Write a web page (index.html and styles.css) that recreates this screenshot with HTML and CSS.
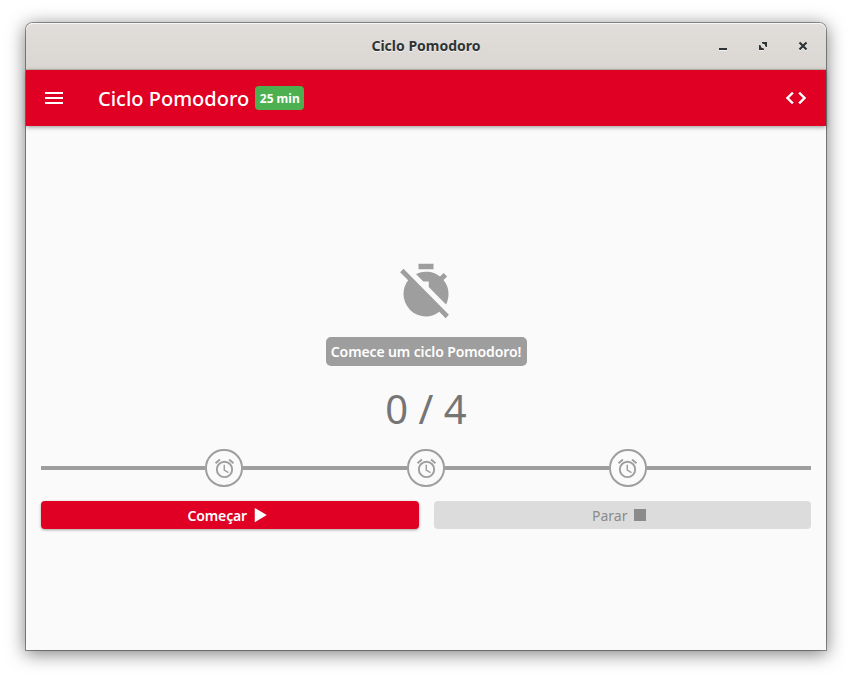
FILE: index.html
```html
<!DOCTYPE html>
<html lang="pt-BR">
<head>
<meta charset="utf-8">
<title>Ciclo Pomodoro</title>
<link rel="stylesheet" href="styles.css">
</head>
<body>
<svg class="defs" width="0" height="0">
  <symbol id="alarm" viewBox="0 0 24 24"><path d="M12 20a7 7 0 0 1-7-7 7 7 0 0 1 7-7 7 7 0 0 1 7 7 7 7 0 0 1-7 7m0-16a9 9 0 0 0-9 9 9 9 0 0 0 9 9 9 9 0 0 0 9-9 9 9 0 0 0-9-9m.5 4H11v6l4.750 2.850.75-1.230-4-2.370V8M7.880 3.390L6.600 1.860 2 5.710l1.290 1.530 4.590-3.850M22 5.720l-4.600-3.860-1.290 1.530 4.600 3.860L22 5.720z"/></symbol>
</svg>
<div class="window">
  <header class="titlebar">
    <span class="side"></span>
    <h1 class="caption">Ciclo Pomodoro</h1>
    <div class="side controls">
      <svg width="10" height="10" viewBox="0 0 10 10"><path class="glow" d="M1 8h8v2H1z"/><path d="M1 7h8v2H1z"/></svg>
      <svg width="10" height="10" viewBox="0 0 10 10"><path class="glow" d="M4 2h5v5L7.500 6 6 4.500zM1 5l2 1 2 2 1 2H1z"/><path d="M4 1h5v5H8L7 5V4L6 3H5L4 2zM1 4h1l1 1v1l1 1h1l1 1v1H1z"/></svg>
      <svg width="10" height="10" viewBox="0 0 10 10"><path class="glow-line" d="M1.500 2.500l7 7M8.500 2.500l-7 7"/><path class="line" d="M1.500 1.500l7 7M8.500 1.500l-7 7"/></svg>
    </div>
  </header>
  <nav class="appbar">
    <svg class="menu" width="24" height="24" viewBox="0 0 24 24"><path d="M3 6h18v2H3zm0 5h18v2H3zm0 5h18v2H3z"/></svg>
    <h2 class="app-title">Ciclo Pomodoro</h2>
    <span class="badge">25 min</span>
    <svg class="code" width="24" height="24" viewBox="0 0 24 24"><path d="M14.600 16.600l4.600-4.600-4.600-4.600L16 6l6 6-6 6-1.400-1.400m-5.200 0L4.800 12l4.600-4.600L8 6l-6 6 6 6 1.400-1.400z"/></svg>
  </nav>
  <main class="content">
    <svg class="timer" width="60" height="60" viewBox="0 -.2 24 24"><path d="M9 .9h6v2.150H9zM3 2.900L1.650 4.250 4.850 7.450A9 9 0 0 0 3 13 9 9 0 0 0 12 22 9 9 0 0 0 17.300 20.100L19.850 22.650 21.150 21.300zM8 5A9 9 0 0 1 17.600 6l1.450-1.400L20.450 6 19 7.400A9 9 0 0 1 20 17.200L13.100 10.200V8H10.900z"/></svg>
    <p class="hint">Comece um ciclo Pomodoro!</p>
    <p class="count">0 / 4</p>
    <div class="progress">
      <i class="bar"></i><span class="stop"><svg width="23" height="23"><use href="#alarm"/></svg></span>
      <i class="bar"></i><span class="stop"><svg width="23" height="23"><use href="#alarm"/></svg></span>
      <i class="bar"></i><span class="stop"><svg width="23" height="23"><use href="#alarm"/></svg></span>
      <i class="bar"></i>
    </div>
    <div class="actions">
      <button class="btn start"><span>Começar</span><svg width="18" height="18" viewBox="0 0 24 24"><path d="M5 2.500v19L21 12z"/></svg></button>
      <button class="btn halt" disabled><span>Parar</span><svg width="18" height="18" viewBox="0 0 24 24"><path d="M4 4h16v16H4z"/></svg></button>
    </div>
  </main>
</div>
</body>
</html>
```
FILE: styles.css
```css
* { box-sizing: border-box; }
body { margin: 0; height: 679px; overflow: hidden; background: #fff; font-family: "Noto Sans", sans-serif; }
h1, h2, p { margin: 0; }
svg { display: block; fill: currentColor; flex: none; }
.defs { position: absolute; }
.window {
  width: 800px; height: 627px; margin: 23px 0 0 26px;
  background: #fafafa; border-radius: 7px 7px 0 0;
  box-shadow: 0 0 0 1px rgba(0,0,0,.38), 0 3px 18px 1px rgba(0,0,0,.5);
}
.titlebar {
  height: 47px; display: flex; align-items: center;
  padding: 0 18px; border-radius: 7px 7px 0 0;
  background: linear-gradient(#e1dedb, #dad6d2);
  border-bottom: 1px solid #bfb8b1;
  box-shadow: inset 0 1px #f8f7f7;
  color: #2e3436;
}
.side { flex: 1; }
.caption { font-size: 14px; line-height: 20px; text-shadow: 0 1px rgba(255,255,255,.7); }
.controls { display: flex; justify-content: flex-end; gap: 30px; }
.glow { fill: #f3f2f1; }
.glow-line, .line { stroke: #2e3436; stroke-width: 2.200; }
.glow-line { stroke: #f3f2f1; }
.appbar {
  position: relative; height: 56px; padding: 0 18px 0 16px;
  display: flex; align-items: center; color: #fff; background: #df0024;
  box-shadow: 0 2px 4px -1px rgba(0,0,0,.2), 0 1px 5px rgba(0,0,0,.25);
}
.app-title { margin-left: 32px; padding-top: 2px; font-size: 20px; line-height: 28px; font-weight: 500; }
.badge { margin-left: 6px; width: 49px; text-align: center; height: 24px; border-radius: 4px; background: #4caf50; font-size: 12px; line-height: 25px; font-weight: 700; }
.code { margin-left: auto; stroke: currentColor; stroke-width: .5; }
.content { padding: 135px 15px 0; display: flex; flex-direction: column; align-items: center; }
.timer { color: #9e9e9e; }
.hint { margin-top: 16px; width: 201px; text-align: center; white-space: nowrap; height: 29px; border-radius: 5px; background: #9e9e9e; color: #fff; font-size: 14px; line-height: 29px; font-weight: 600; letter-spacing: -.12px; }
.count { margin-top: 18px; height: 50px; font-size: 40px; line-height: 50px; color: #757575; }
.progress { width: 100%; height: 38px; margin-top: 15px; display: flex; align-items: center; color: #9e9e9e; }
.bar { flex: 1; height: 4px; background: #9e9e9e; }
.stop { width: 37.5px; height: 37.5px; border: 2px solid #9e9e9e; border-radius: 50%; display: grid; place-items: center; }
.actions { width: 100%; display: grid; grid-template-columns: 1fr 1fr; gap: 15px; margin-top: 14px; }
.btn { height: 28px; padding: 0 3px 0 0; border: 0; border-radius: 4px; display: flex; align-items: center; justify-content: center; gap: 4px; font: 500 14px/28px "Noto Sans", sans-serif; }
.btn span { padding-top: 2px; }
.start { background: #df0024; color: #fff; box-shadow: 0 1px 3px rgba(0,0,0,.35); }
.start span { font-weight: 600; letter-spacing: -.12px; }
.halt { background: #dcdcdc; color: #8b8b8b; font-weight: 400; }
```
